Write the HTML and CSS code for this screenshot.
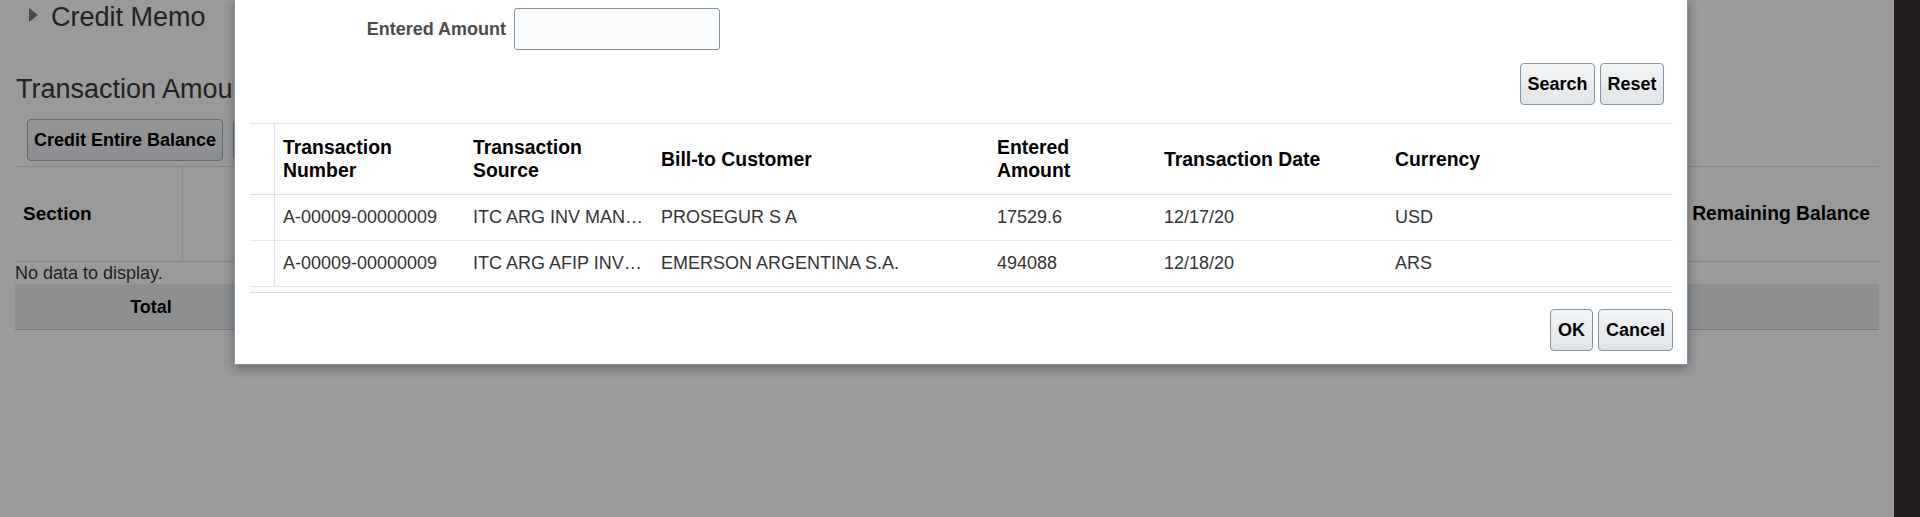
FILE: index.html
```html
<!DOCTYPE html>
<html lang="en">
<head>
<meta charset="utf-8">
<title>Select Transaction</title>
<link rel="stylesheet" href="styles.css">
</head>
<body>
<div class="page">
  <main class="main">
    <div class="cm-header"><span class="disclosure"></span><span class="cm-title">Credit Memo</span></div>
    <h2 class="section-title">Transaction Amounts</h2>
    <div class="bg-toolbar">
      <button class="bg-btn">Credit Entire Balance</button>
      <button class="bg-btn bg-btn-hidden" aria-label="Credit Partial Amount"></button>
    </div>
    <div class="bg-table">
      <div class="bg-head">
        <div class="bg-cell bg-section">Section</div>
        <div class="bg-cell bg-fill"></div>
        <div class="bg-cell bg-remaining">Remaining Balance</div>
      </div>
      <div class="bg-empty">No data to display.</div>
      <div class="bg-total">
        <div class="bg-total-label">Total</div>
      </div>
    </div>
  </main>
  <div class="strip"></div>
</div>

<div class="dialog">
  <div class="search-row">
    <label class="search-label" for="amt">Entered Amount</label>
    <input class="search-input" id="amt" type="text">
  </div>
  <div class="search-actions">
    <button class="btn">Search</button>
    <button class="btn">Reset</button>
  </div>
  <div class="results">
    <div class="r-row r-head">
      <div class="sel"></div>
      <div class="c w1">Transaction<br>Number</div>
      <div class="c w2">Transaction<br>Source</div>
      <div class="c w3">Bill-to Customer</div>
      <div class="c w4">Entered<br>Amount</div>
      <div class="c w5">Transaction Date</div>
      <div class="c w6">Currency</div>
    </div>
    <div class="r-row r-data">
      <div class="sel"></div>
      <div class="c w1">A-00009-00000009</div>
      <div class="c w2">ITC ARG INV MAN…</div>
      <div class="c w3">PROSEGUR S A</div>
      <div class="c w4">17529.6</div>
      <div class="c w5">12/17/20</div>
      <div class="c w6">USD</div>
    </div>
    <div class="r-row r-data">
      <div class="sel"></div>
      <div class="c w1">A-00009-00000009</div>
      <div class="c w2">ITC ARG AFIP INV…</div>
      <div class="c w3">EMERSON ARGENTINA S.A.</div>
      <div class="c w4">494088</div>
      <div class="c w5">12/18/20</div>
      <div class="c w6">ARS</div>
    </div>
    <div class="r-foot"></div>
  </div>
  <div class="dialog-actions">
    <button class="btn">OK</button>
    <button class="btn">Cancel</button>
  </div>
</div>
</body>
</html>
```

FILE: styles.css
```css
* { box-sizing: border-box; }

html, body {
  margin: 0;
  padding: 0;
  height: 517px;
  overflow: hidden;
}

body {
  font-family: "Liberation Sans", Arial, sans-serif;
  background: #9a9a9a;
  position: relative;
}

button { font-family: inherit; }

.page {
  display: flex;
  height: 517px;
}

.main {
  flex: 1;
  background: #9a9a9a;
  padding: 0 15px;
  color: #1e1e1e;
}

.strip {
  width: 26px;
  background: #201d1c;
}

/* background page */
.cm-header {
  display: flex;
  align-items: flex-start;
  padding-top: 1px;
  padding-left: 14px;
  height: 34px;
}

.disclosure {
  width: 0;
  height: 0;
  margin-top: 7px;
  border-top: 7.5px solid transparent;
  border-bottom: 7.5px solid transparent;
  border-left: 9px solid #4a4a4a;
}

.cm-title {
  font-size: 27px;
  line-height: 32px;
  margin-left: 13px;
  color: #222;
}

.section-title {
  margin: 39px 0 0 1px;
  font-size: 27px;
  line-height: 32px;
  font-weight: normal;
  color: #222;
}

.bg-toolbar {
  display: flex;
  gap: 10px;
  padding-left: 12px;
  margin-top: 14px;
}

.bg-btn {
  height: 42px;
  padding: 0 6px;
  border: 1px solid #5f6a74;
  border-radius: 4px;
  background: linear-gradient(#969799, #8b8d90);
  font-weight: bold;
  font-size: 18px;
  color: #000;
}

.bg-btn-hidden { width: 120px; }

.bg-table {
  margin-top: 5px;
  border-top: 1px solid #888;
}

.bg-head {
  display: flex;
  height: 95px;
  border-bottom: 1px solid #858585;
}

.bg-cell {
  display: flex;
  align-items: center;
  font-weight: bold;
  font-size: 19px;
  color: #000;
}

.bg-section {
  width: 168px;
  padding-left: 8px;
  border-right: 1px solid #8a8a8a;
}

.bg-fill { flex: 1; }

.bg-remaining {
  padding-right: 9px;
  font-size: 19.3px;
}

.bg-empty {
  font-size: 18px;
  line-height: 21px;
  padding-top: 1px;
  color: #1e1e1e;
}

.bg-total {
  height: 46px;
  background: #8e8f91;
  border-bottom: 1px solid #7c7c7c;
  display: flex;
  align-items: center;
  padding-top: 1px;
}

.bg-total-label {
  width: 272px;
  text-align: center;
  font-weight: bold;
  font-size: 18px;
  color: #000;
}

/* dialog */
.dialog {
  position: absolute;
  left: 234px;
  top: -1px;
  width: 1454px;
  height: 366px;
  background: #fff;
  border: 1px solid #7b95ac;
  box-shadow: 0 3px 10px rgba(0, 0, 0, 0.35);
  padding: 0 14px 0 15px;
}

.search-row {
  display: flex;
  align-items: center;
  gap: 8px;
  margin-top: 8px;
}

.search-label {
  width: 256px;
  text-align: right;
  font-weight: bold;
  font-size: 18px;
  color: #4b4b4b;
}

.search-input {
  width: 206px;
  height: 42px;
  border: 1px solid #7d93a3;
  border-radius: 3px;
  background: #fbfcfe;
  margin: 0;
}

.search-actions {
  display: flex;
  justify-content: flex-end;
  gap: 5px;
  margin-top: 13px;
  padding-right: 9px;
}

.search-actions .btn { padding: 0 6.5px; }

.btn {
  height: 42px;
  padding: 0 7px;
  border: 1px solid #7f95a8;
  border-radius: 4px;
  background: linear-gradient(#f3f4f5, #e0e4e8);
  font-weight: bold;
  font-size: 18px;
  color: #000;
}

.results {
  margin-top: 18px;
  border-top: 1px solid #dbe3ea;
}

.r-row {
  display: flex;
  align-items: stretch;
}

.r-head {
  height: 71px;
  border-bottom: 1px solid #d8e0e8;
}

.r-data {
  height: 46px;
  border-bottom: 1px solid #e4e8ed;
}

.sel {
  width: 25px;
  flex: none;
  border-right: 1px solid #d9e1e9;
}

.c {
  display: flex;
  align-items: center;
  flex: none;
  padding-left: 9px;
  white-space: nowrap;
  overflow: hidden;
}

.w1 { width: 189px; padding-left: 8px; }
.w2 { width: 188px; }
.w3 { width: 336px; }
.w4 { width: 167px; }
.w5 { width: 231px; }
.w6 { flex: 1; }

.r-head .c {
  font-weight: bold;
  font-size: 19.4px;
  line-height: 23px;
  color: #000;
}

.r-data .c {
  font-size: 18px;
  color: #333;
}

.r-foot {
  height: 6px;
  border-bottom: 1px solid #d9e0e7;
}

.dialog-actions {
  display: flex;
  justify-content: flex-end;
  gap: 5px;
  margin-top: 16px;
}
```
